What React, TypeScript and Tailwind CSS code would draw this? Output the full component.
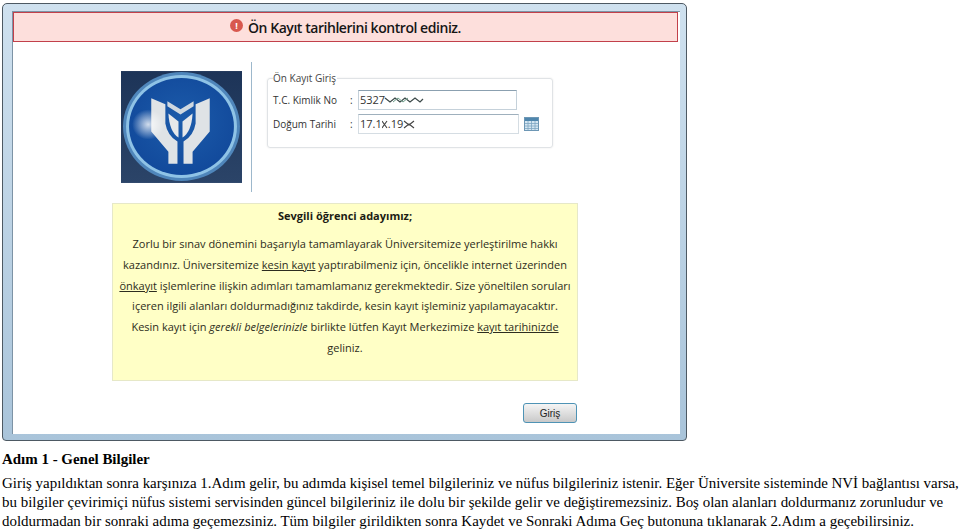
function Logo() {
  return (
    <svg width="121" height="112" viewBox="0 0 120 111" className="block shrink-0">
      <defs>
        <linearGradient id="corner" x1="0" y1="0" x2="0" y2="1">
          <stop offset="0" stopColor="#1d3458" />
          <stop offset="1" stopColor="#2b4468" />
        </linearGradient>
        <radialGradient id="disc" cx="0.5" cy="0.45" r="0.6">
          <stop offset="0" stopColor="#1c5cab" />
          <stop offset="1" stopColor="#11489a" />
        </radialGradient>
        <radialGradient id="glow" cx="0.5" cy="0.5" r="0.5">
          <stop offset="0" stopColor="#ffffff" stopOpacity="0.8" />
          <stop offset="1" stopColor="#ffffff" stopOpacity="0" />
        </radialGradient>
      </defs>
      <rect width="120" height="111" fill="url(#corner)" />
      <ellipse cx="60" cy="55" rx="58" ry="54" fill="#4f86bb" />
      <ellipse cx="60" cy="55" rx="55" ry="51" fill="#8fc3e6" />
      <ellipse cx="60" cy="55" rx="52" ry="48" fill="url(#disc)" />
      <path d="M30 27 L44 33 L44 52 Q46 64 56 70 L56 92 L47 92 L47 80 L30 60 Z" fill="#dfe3e6" />
      <path d="M88 27 L74 33 L74 52 Q72 64 62 70 L62 92 L71 92 L71 80 L88 60 Z" fill="#dfe3e6" />
      <path d="M46 30 L59 38 L72 30 L72 35 L59 43 L46 35 Z" fill="#cfd8e0" />
      <path d="M47 42 L57 50 L57 66 Q48 60 47 42 Z" fill="#e6e8ea" />
      <path d="M71 42 L61 50 L61 66 Q70 60 71 42 Z" fill="#e6e8ea" />
      <ellipse cx="27" cy="53" rx="16" ry="15" fill="url(#glow)" />
    </svg>
  );
}

function Scribble({ d }: { d: string }) {
  return (
    <svg width="40" height="10" viewBox="0 0 40 10" className="-ml-px">
      <path d={d} fill="none" stroke="#3d4a4a" strokeWidth="1.3" />
      <path d="M9 7 L14 3 L19 7 L24 3" fill="none" stroke="#6fa08c" strokeWidth="1" />
    </svg>
  );
}

function CalendarIcon() {
  return (
    <svg width="15" height="14" viewBox="0 0 15 14" className="ml-[5px] shrink-0">
      <rect x="0.5" y="0.5" width="14" height="13" fill="#d4e6f2" stroke="#6d97b5" />
      <rect x="1" y="1" width="13" height="3" fill="#4f86ad" />
      <path d="M1 6.5H14M1 9H14M1 11.5H14M4 4V13M7.5 4V13M11 4V13" stroke="#7ea6c2" strokeWidth="0.8" />
    </svg>
  );
}

export default function App() {
  return (
    <div className="w-[959px] h-[531px] overflow-hidden bg-white pt-[3px] font-['Liberation_Serif',serif] text-black">
      <div className="ml-[2px] h-[438px] w-[685px] rounded-t-[5px] rounded-b-[4px] border border-[#4d5963] bg-gradient-to-b from-[#cfe1ef] to-[#a9c4da] pt-[7px] pr-[6px] pb-[6px] pl-[9px]">
        <div className="h-[423px] border-t border-l border-[#7d93a5] bg-white font-['Open_Sans',sans-serif]">
          <div className="mr-[2px] flex h-[30px] items-center justify-center gap-[5px] border border-[#c2404a] bg-[#fddfdc] pt-[1px]">
            <div className="mb-[4px] flex h-[13px] w-[13px] items-center justify-center rounded-full bg-[#d8584e] text-[9px] leading-none font-bold text-white">!</div>
            <span className="text-[14px] font-semibold tracking-[-0.45px] text-[#161616]">Ön Kayıt tarihlerini kontrol ediniz.</span>
          </div>

          <div className="mt-[20px] flex h-[130px] items-start pl-[108px]">
            <div className="mt-[9px]"><Logo /></div>
            <div className="ml-[9px] h-[130px] w-[1px] bg-[#9db8cc]" />
            <fieldset className="mt-[10px] ml-[15px] h-[76px] w-[286px] rounded-[3px] border border-[#e0e3e6] pl-[5px] shadow-[0_0_2px_#e8e8e8]">
              <legend className="bg-white pr-[1px] text-[10px] leading-[13px] text-[#444]">Ön Kayıt Giriş</legend>
              <div className="flex items-center pt-[5px] text-[10px] text-[#333]">
                <span className="w-[77px]">T.C. Kimlik No</span>
                <span className="w-[8px]">:</span>
                <div className="flex h-[20px] w-[159px] items-center border border-[#c5d1da] border-t-[#8ba0b0] bg-white pl-[1px] text-[11px]">
                  <span>5327</span>
                  <Scribble d="M1 3 L6 7 L11 3 L16 7 L21 3 L26 7 L31 3 L36 7 L39 4" />
                </div>
              </div>
              <div className="mt-[4px] flex items-center text-[10px] text-[#333]">
                <span className="w-[77px]">Doğum Tarihi</span>
                <span className="w-[8px]">:</span>
                <div className="flex h-[20px] w-[161px] items-center border border-[#d5dde3] border-t-[#9fb0bd] bg-white pl-[1px] text-[11px]">
                  <span>17.1</span>
                  <svg width="6" height="9" viewBox="0 0 6 9"><path d="M0 1 L5 8 M5 1 L0 8" stroke="#444" strokeWidth="1.1" /></svg>
                  <span>.19</span>
                  <svg width="12" height="9" viewBox="0 0 12 9"><path d="M1 1 L6 5 L11 1 M1 8 L6 4 L11 8" fill="none" stroke="#444" strokeWidth="1.2" /></svg>
                </div>
                <CalendarIcon />
              </div>
            </fieldset>
          </div>

          <div className="mt-[11px] ml-[99px] h-[178px] w-[466px] whitespace-nowrap border border-[#e6e8c8] bg-[#ffffc6] pt-[2px] text-center text-[11px] leading-[20.8px] text-[#2d2d20]">
            <div className="mb-[9px] leading-[19px] font-bold text-[#1c1c14]">Sevgili öğrenci adayımız;</div>
            <p>Zorlu bir sınav dönemini başarıyla tamamlayarak Üniversitemize yerleştirilme hakkı</p>
            <p>kazandınız. Üniversitemize <u>kesin kayıt</u> yaptırabilmeniz için, öncelikle internet üzerinden</p>
            <p><u>önkayıt</u> işlemlerine ilişkin adımları tamamlamanız gerekmektedir. Size yöneltilen soruları</p>
            <p>içeren ilgili alanları doldurmadığınız takdirde, kesin kayıt işleminiz yapılamayacaktır.</p>
            <p>Kesin kayıt için <i>gerekli belgelerinizle</i> birlikte lütfen Kayıt Merkezimize <u>kayıt tarihinizde</u></p>
            <p>geliniz.</p>
          </div>

          <div className="mt-[22px] flex justify-end pr-[103px]">
            <button className="h-[20px] w-[54px] rounded-[3px] border border-[#4e93b5] bg-gradient-to-b from-[#f5f5f5] to-[#c9c9c9] font-['Liberation_Sans',sans-serif] text-[10px] text-[#222]">Giriş</button>
          </div>
        </div>
      </div>

      <h2 className="mt-[11px] pl-[2px] text-[14.95px] leading-[15px] font-bold">Adım 1 - Genel Bilgiler</h2>
      <p className="mt-[7px] w-[959px] pl-[2px] text-[14.95px] leading-[19px] whitespace-nowrap">
        Giriş yapıldıktan sonra karşınıza 1.Adım gelir, bu adımda kişisel temel bilgileriniz ve nüfus bilgileriniz istenir. Eğer Üniversite sisteminde NVİ bağlantısı varsa,<br />
        bu bilgiler çevirimiçi nüfus sistemi servisinden güncel bilgileriniz ile dolu bir şekilde gelir ve değiştiremezsiniz. Boş olan alanları doldurmanız zorunludur ve<br />
        doldurmadan bir sonraki adıma geçemezsiniz. Tüm bilgiler girildikten sonra Kaydet ve Sonraki Adıma Geç butonuna tıklanarak 2.Adım a geçebilirsiniz.
      </p>
    </div>
  );
}
